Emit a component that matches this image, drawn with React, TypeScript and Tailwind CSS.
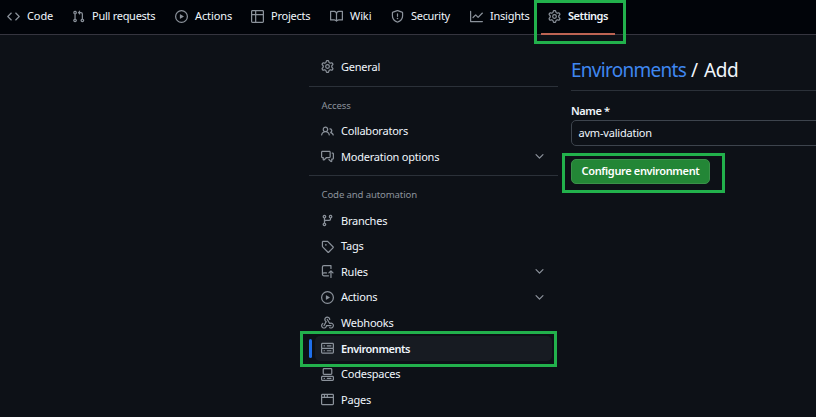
import React from 'react';

const ICONS = {
  code: 'm11.28 3.22 4.25 4.25a.75.75 0 0 1 0 1.06l-4.25 4.25a.749.749 0 0 1-1.275-.326.749.749 0 0 1 .215-.734L13.94 8l-3.72-3.72a.749.749 0 0 1 .326-1.275.749.749 0 0 1 .734.215Zm-6.56 0a.751.751 0 0 1 1.042.018.751.751 0 0 1 .018 1.042L2.06 8l3.72 3.72a.749.749 0 0 1-.326 1.275.749.749 0 0 1-.734-.215L.47 8.53a.75.75 0 0 1 0-1.06Z',
  pull: 'M1.5 3.25a2.25 2.25 0 1 1 3 2.122v5.256a2.251 2.251 0 1 1-1.5 0V5.372A2.25 2.25 0 0 1 1.5 3.25Zm5.677-.177L9.573.677A.25.25 0 0 1 10 .854V2.5h1A2.5 2.5 0 0 1 13.5 5v5.628a2.251 2.251 0 1 1-1.5 0V5a1 1 0 0 0-1-1h-1v1.646a.25.25 0 0 1-.427.177L7.177 3.427a.25.25 0 0 1 0-.354ZM3.75 2.5a.75.75 0 1 0 0 1.5.75.75 0 0 0 0-1.5Zm0 9.5a.75.75 0 1 0 0 1.5.75.75 0 0 0 0-1.5Zm8.25.75a.75.75 0 1 0 1.5 0 .75.75 0 0 0-1.5 0Z',
  play: 'M8 0a8 8 0 1 1 0 16A8 8 0 0 1 8 0ZM1.5 8a6.5 6.5 0 1 0 13 0 6.5 6.5 0 0 0-13 0Zm4.879-2.773 4.264 2.559a.25.25 0 0 1 0 .428l-4.264 2.559A.25.25 0 0 1 6 10.559V5.442a.25.25 0 0 1 .379-.215Z',
  table: 'M0 1.75C0 .784.784 0 1.75 0h12.5C15.216 0 16 .784 16 1.75v12.5A1.75 1.75 0 0 1 14.25 16H1.75A1.75 1.75 0 0 1 0 14.25ZM6.5 6.5v8h7.75a.25.25 0 0 0 .25-.25V6.5Zm8-1.5V1.75a.25.25 0 0 0-.25-.25H6.5V5Zm-13 1.5v7.75c0 .138.112.25.25.25H5v-8ZM5 5V1.5H1.75a.25.25 0 0 0-.25.25V5Z',
  book: 'M0 1.75A.75.75 0 0 1 .75 1h4.253c1.227 0 2.317.59 3 1.501A3.743 3.743 0 0 1 11.006 1h4.245a.75.75 0 0 1 .75.75v10.5a.75.75 0 0 1-.75.75h-4.507a2.25 2.25 0 0 0-1.591.659l-.622.621a.75.75 0 0 1-1.06 0l-.622-.621A2.25 2.25 0 0 0 5.258 13H.75a.75.75 0 0 1-.75-.75Zm7.251 10.324.004-5.073-.002-2.253A2.25 2.25 0 0 0 5.003 2.5H1.5v9h3.757a3.75 3.75 0 0 1 1.994.574ZM8.755 4.75l-.004 7.322a3.752 3.752 0 0 1 1.992-.572H14.5v-9h-3.495a2.25 2.25 0 0 0-2.25 2.25Z',
  shield: 'M7.467.133a1.748 1.748 0 0 1 1.066 0l5.25 1.68A1.75 1.75 0 0 1 15 3.48V7c0 1.566-.32 3.182-1.303 4.682-.983 1.498-2.585 2.813-5.032 3.855a1.697 1.697 0 0 1-1.33 0c-2.447-1.042-4.049-2.357-5.032-3.855C1.32 10.182 1 8.566 1 7V3.48a1.75 1.75 0 0 1 1.217-1.667Zm.61 1.429a.25.25 0 0 0-.153 0l-5.25 1.68a.25.25 0 0 0-.174.238V7c0 1.358.275 2.666 1.057 3.86.784 1.194 2.121 2.34 4.366 3.297a.196.196 0 0 0 .154 0c2.245-.956 3.582-2.104 4.366-3.298C13.225 9.666 13.5 8.36 13.5 7V3.48a.251.251 0 0 0-.174-.237l-5.25-1.68ZM8.75 4.75v3a.75.75 0 0 1-1.5 0v-3a.75.75 0 0 1 1.5 0ZM9 10.5a1 1 0 1 1-2 0 1 1 0 0 1 2 0Z',
  graph: 'M1.5 1.75V13.5h13.75a.75.75 0 0 1 0 1.5H.75a.75.75 0 0 1-.75-.75V1.75a.75.75 0 0 1 1.5 0Zm14.28 2.53-5.25 5.25a.75.75 0 0 1-1.06 0L7 7.06 4.28 9.78a.751.751 0 0 1-1.042-.018.751.751 0 0 1-.018-1.042l3.25-3.25a.75.75 0 0 1 1.06 0L10 7.94l4.72-4.72a.751.751 0 0 1 1.042.018.751.751 0 0 1 .018 1.042Z',
  gear: 'M8 0a8.2 8.2 0 0 1 .701.031C9.444.095 9.99.645 10.16 1.29l.288 1.107c.018.066.079.158.212.224.231.114.454.243.668.386.123.082.233.09.299.071l1.103-.303c.644-.176 1.392.021 1.82.63.27.385.506.792.704 1.218.315.675.111 1.422-.364 1.891l-.814.806c-.049.048-.098.147-.088.294.016.257.016.515 0 .772-.01.147.038.246.088.294l.814.806c.475.469.679 1.216.364 1.891a7.977 7.977 0 0 1-.704 1.217c-.428.61-1.176.807-1.82.63l-1.102-.302c-.067-.019-.177-.011-.3.071a5.909 5.909 0 0 1-.668.386c-.133.066-.194.158-.211.224l-.29 1.106c-.168.646-.715 1.196-1.458 1.26a8.006 8.006 0 0 1-1.402 0c-.743-.064-1.289-.614-1.458-1.26l-.289-1.106c-.018-.066-.079-.158-.212-.224a5.738 5.738 0 0 1-.668-.386c-.123-.082-.233-.09-.299-.071l-1.103.303c-.644.176-1.392-.021-1.82-.63a8.12 8.12 0 0 1-.704-1.218c-.315-.675-.111-1.422.363-1.891l.815-.806c.05-.048.098-.147.088-.294a6.214 6.214 0 0 1 0-.772c.01-.147-.038-.246-.088-.294l-.815-.806C.635 6.045.431 5.298.746 4.623a7.92 7.92 0 0 1 .704-1.217c.428-.61 1.176-.807 1.82-.63l1.102.302c.067.019.177.011.3-.071.214-.143.437-.272.668-.386.133-.066.194-.158.211-.224l.29-1.106C6.009.645 6.556.095 7.299.03 7.53.01 7.764 0 8 0Zm-.571 1.525c-.036.003-.108.036-.137.146l-.289 1.105c-.147.561-.549.967-.998 1.189-.173.086-.34.183-.5.29-.417.278-.97.423-1.529.27l-1.103-.303c-.109-.03-.175.016-.195.045-.22.312-.412.644-.573.99-.014.031-.021.11.059.19l.815.806c.411.406.562.957.53 1.456a4.709 4.709 0 0 0 0 .582c.032.499-.119 1.05-.53 1.456l-.815.806c-.081.08-.073.159-.059.19.162.346.353.677.573.989.02.03.085.076.195.046l1.102-.303c.56-.153 1.113-.008 1.53.27.161.107.328.204.501.29.447.222.85.629.997 1.189l.289 1.105c.029.109.101.143.137.146a6.6 6.6 0 0 0 1.142 0c.036-.003.108-.036.137-.146l.289-1.105c.147-.561.549-.967.998-1.189.173-.086.34-.183.5-.29.417-.278.97-.423 1.529-.27l1.103.303c.109.029.175-.016.195-.045.22-.313.411-.644.573-.99.014-.031.021-.11-.059-.19l-.815-.806c-.411-.406-.562-.957-.53-1.456a4.709 4.709 0 0 0 0-.582c-.032-.499.119-1.05.53-1.456l.815-.806c.081-.08.073-.159.059-.19a6.464 6.464 0 0 0-.573-.989c-.02-.03-.085-.076-.195-.046l-1.102.303c-.56.153-1.113.008-1.53-.27a4.44 4.44 0 0 0-.501-.29c-.447-.222-.85-.629-.997-1.189l-.289-1.105c-.029-.11-.101-.143-.137-.146a6.6 6.6 0 0 0-1.142 0ZM11 8a3 3 0 1 1-6 0 3 3 0 0 1 6 0ZM9.5 8a1.5 1.5 0 1 0-3.001.001A1.5 1.5 0 0 0 9.5 8Z',
  people: 'M2 5.5a3.5 3.5 0 1 1 5.898 2.549 5.508 5.508 0 0 1 3.034 4.084.75.75 0 1 1-1.482.235 4 4 0 0 0-7.9 0 .75.75 0 0 1-1.482-.236A5.507 5.507 0 0 1 3.102 8.05 3.493 3.493 0 0 1 2 5.5ZM11 4a3.001 3.001 0 0 1 2.22 5.018 5.01 5.01 0 0 1 2.56 3.012.749.749 0 0 1-.885.954.752.752 0 0 1-.549-.514 3.507 3.507 0 0 0-2.522-2.372.75.75 0 0 1-.574-.73v-.352a.75.75 0 0 1 .416-.672A1.5 1.5 0 0 0 11 5.5.75.75 0 0 1 11 4Zm-5.5-.5a2 2 0 1 0-.001 3.999A2 2 0 0 0 5.5 3.5Z',
  discussion: 'M1.75 1h8.5c.966 0 1.75.784 1.75 1.75v5.5A1.75 1.75 0 0 1 10.25 10H7.061l-2.574 2.573A1.458 1.458 0 0 1 2 11.543V10h-.25A1.75 1.75 0 0 1 0 8.25v-5.5C0 1.784.784 1 1.75 1ZM1.5 2.75v5.5c0 .138.112.25.25.25h1a.75.75 0 0 1 .75.75v2.19l2.72-2.72a.749.749 0 0 1 .53-.22h3.5a.25.25 0 0 0 .25-.25v-5.5a.25.25 0 0 0-.25-.25h-8.5a.25.25 0 0 0-.25.25Zm13 2a.25.25 0 0 0-.25-.25h-.5a.75.75 0 0 1 0-1.5h.5c.966 0 1.75.784 1.75 1.75v5.5A1.75 1.75 0 0 1 14.25 12H14v1.543a1.458 1.458 0 0 1-2.487 1.03L9.22 12.28a.749.749 0 0 1 .326-1.275.749.749 0 0 1 .734.215l2.22 2.22v-2.19a.75.75 0 0 1 .75-.75h1a.25.25 0 0 0 .25-.25Z',
  branch: 'M9.5 3.25a2.25 2.25 0 1 1 3 2.122V6A2.5 2.5 0 0 1 10 8.5H6a1 1 0 0 0-1 1v1.128a2.251 2.251 0 1 1-1.5 0V5.372a2.25 2.25 0 1 1 1.5 0v1.836A2.493 2.493 0 0 1 6 7h4a1 1 0 0 0 1-1v-.628A2.25 2.25 0 0 1 9.5 3.25Zm-6 0a.75.75 0 1 0 1.5 0 .75.75 0 0 0-1.5 0Zm8.25-.75a.75.75 0 1 0 0 1.5.75.75 0 0 0 0-1.5ZM4.25 12a.75.75 0 1 0 0 1.5.75.75 0 0 0 0-1.5Z',
  tag: 'M1 7.775V2.75C1 1.784 1.784 1 2.75 1h5.025c.464 0 .91.184 1.238.513l6.25 6.25a1.75 1.75 0 0 1 0 2.474l-5.026 5.026a1.75 1.75 0 0 1-2.474 0l-6.25-6.25A1.752 1.752 0 0 1 1 7.775Zm1.5 0c0 .066.026.13.073.177l6.25 6.25a.25.25 0 0 0 .354 0l5.025-5.025a.25.25 0 0 0 0-.354l-6.25-6.25a.25.25 0 0 0-.177-.073H2.75a.25.25 0 0 0-.25.25ZM6 5a1 1 0 1 1 0 2 1 1 0 0 1 0-2Z',
  push: 'M1 2.5A2.5 2.5 0 0 1 3.5 0h8.75a.75.75 0 0 1 .75.75v3.5a.75.75 0 0 1-1.5 0V1.5h-8a1 1 0 0 0-1 1v6.708A2.493 2.493 0 0 1 3.5 9h3.25a.75.75 0 0 1 0 1.5H3.5a1 1 0 0 0 0 2h5.75a.75.75 0 0 1 0 1.5H3.5A2.5 2.5 0 0 1 1 11.5Zm13.23 7.79-.001-.001-1.224-1.224v6.184a.75.75 0 0 1-1.5 0V9.066L10.28 10.29a.75.75 0 0 1-1.06-1.061l2.505-2.504a.75.75 0 0 1 1.06 0L15.29 9.23a.751.751 0 0 1-.018 1.042.751.751 0 0 1-1.042.018Z',
  webhook: 'M5.5 4.25a2.25 2.25 0 0 1 4.5 0 .75.75 0 0 0 1.5 0 3.75 3.75 0 1 0-6.14 2.889l-2.272 4.258a.75.75 0 0 0 1.324.706L7 7.25a.75.75 0 0 0-.309-1.015A2.25 2.25 0 0 1 5.5 4.25ZM7.364 3.607a.75.75 0 0 1 1.03.257l2.608 4.349a3.75 3.75 0 1 1-.628 6.785.75.75 0 0 1 .752-1.299 2.25 2.25 0 1 0-.033-3.88.75.75 0 0 1-1.03-.256L7.107 4.636a.75.75 0 0 1 .257-1.03ZM2.9 8.776A.75.75 0 0 1 2.625 9.8 2.25 2.25 0 1 0 6 11.75a.75.75 0 0 1 .75-.751h5.5a.75.75 0 0 1 0 1.5H7.425a3.751 3.751 0 1 1-5.55-3.998.75.75 0 0 1 1.024.274Z',
  server: 'M1.75 1h12.5c.966 0 1.75.784 1.75 1.75v4c0 .372-.116.717-.314 1 .198.283.314.628.314 1v4a1.75 1.75 0 0 1-1.75 1.75H1.75A1.75 1.75 0 0 1 0 12.75v-4c0-.358.109-.707.314-1a1.739 1.739 0 0 1-.314-1v-4C0 1.784.784 1 1.75 1ZM1.5 2.75v4c0 .138.112.25.25.25h12.5a.25.25 0 0 0 .25-.25v-4a.25.25 0 0 0-.25-.25H1.75a.25.25 0 0 0-.25.25Zm.25 5.75a.25.25 0 0 0-.25.25v4c0 .138.112.25.25.25h12.5a.25.25 0 0 0 .25-.25v-4a.25.25 0 0 0-.25-.25ZM7 4.75A.75.75 0 0 1 7.75 4h4.5a.75.75 0 0 1 0 1.5h-4.5A.75.75 0 0 1 7 4.75ZM7.75 10h4.5a.75.75 0 0 1 0 1.5h-4.5a.75.75 0 0 1 0-1.5ZM3 4.75A.75.75 0 0 1 3.75 4h.5a.75.75 0 0 1 0 1.5h-.5A.75.75 0 0 1 3 4.75ZM3.75 10h.5a.75.75 0 0 1 0 1.5h-.5a.75.75 0 0 1 0-1.5Z',
  codespaces: 'M0 11.25c0-.966.784-1.75 1.75-1.75h12.5c.966 0 1.75.784 1.75 1.75v3A1.75 1.75 0 0 1 14.25 16H1.75A1.75 1.75 0 0 1 0 14.25Zm2-9.5C2 .784 2.784 0 3.75 0h8.5C13.216 0 14 .784 14 1.75v5a1.75 1.75 0 0 1-1.75 1.75h-8.5A1.75 1.75 0 0 1 2 6.75Zm1.75-.25a.25.25 0 0 0-.25.25v5c0 .138.112.25.25.25h8.5a.25.25 0 0 0 .25-.25v-5a.25.25 0 0 0-.25-.25Zm-2 9.5a.25.25 0 0 0-.25.25v3c0 .138.112.25.25.25h12.5a.25.25 0 0 0 .25-.25v-3a.25.25 0 0 0-.25-.25ZM7 12.75a.75.75 0 0 1 .75-.75h4.5a.75.75 0 0 1 0 1.5h-4.5a.75.75 0 0 1-.75-.75Zm-4 0a.75.75 0 0 1 .75-.75h.5a.75.75 0 0 1 0 1.5h-.5a.75.75 0 0 1-.75-.75Z',
  browser: 'M0 2.75C0 1.784.784 1 1.75 1h12.5c.966 0 1.75.784 1.75 1.75v10.5A1.75 1.75 0 0 1 14.25 15H1.75A1.75 1.75 0 0 1 0 13.25ZM14.5 6h-13v7.25c0 .138.112.25.25.25h12.5a.25.25 0 0 0 .25-.25Zm-6-3.5v2h6V2.75a.25.25 0 0 0-.25-.25ZM5 2.5v2h2v-2Zm-3.25 0a.25.25 0 0 0-.25.25V4.5h2v-2Z',
  chevron: 'M12.78 5.22a.749.749 0 0 1 0 1.06l-4.25 4.25a.749.749 0 0 1-1.06 0L3.22 6.28a.749.749 0 1 1 1.06-1.06L8 8.939l3.72-3.719a.749.749 0 0 1 1.06 0Z',
};

type IconName = keyof typeof ICONS;

function Icon({ name }: { name: IconName }) {
  return (
    <svg viewBox="0 0 16 16" className="size-[13px] shrink-0 fill-[#8b929b]" aria-hidden="true">
      <path d={ICONS[name]} />
    </svg>
  );
}

const TABS: { icon: IconName; label: string; box: string; text: string }[] = [
  { icon: 'code', label: 'Code', box: 'w-[65px]', text: '' },
  { icon: 'pull', label: 'Pull requests', box: 'w-[103px]', text: 'tracking-[-0.27px]' },
  { icon: 'play', label: 'Actions', box: 'w-[76px]', text: '' },
  { icon: 'table', label: 'Projects', box: 'w-[79px]', text: 'tracking-[-0.25px]' },
  { icon: 'book', label: 'Wiki', box: 'w-[61px]', text: '' },
  { icon: 'shield', label: 'Security', box: 'w-[79px]', text: 'tracking-[-0.3px]' },
  { icon: 'graph', label: 'Insights', box: 'w-[78px]', text: 'tracking-[-0.25px]' },
];

function Row({ icon, label, expandable = false }: { icon: IconName; label: string; expandable?: boolean }) {
  return (
    <a className="flex h-[25.6px] items-center gap-[7px] pl-[12px] pr-[12px]">
      <Icon name={icon} />
      <span className="grow">{label}</span>
      {expandable && <Icon name="chevron" />}
    </a>
  );
}

export default function App() {
  return (
    <div className="relative flex h-[417px] w-[816px] flex-col overflow-hidden bg-[#0d1117] font-['Noto_Sans','Open_Sans',sans-serif] text-[11px] leading-4 tracking-[-0.1px] whitespace-nowrap text-[#f0f6fc]">
      <nav className="flex h-[35px] shrink-0 items-start border-b border-[#35353f] bg-[#010409] pl-[7px]">
        {TABS.map((t) => (
          <a key={t.label} className={'flex h-8 shrink-0 items-center gap-[7px] ' + t.box}>
            <Icon name={t.icon} />
            <span className={t.text}>{t.label}</span>
          </a>
        ))}
        <a className="-ml-[7px] flex h-[35px] w-[74px] shrink-0 items-start gap-[7px] border-b-2 border-[#bd6453] pl-[7px] font-semibold">
          <span className="flex h-8 items-center gap-[7px]">
            <Icon name="gear" />
            <span className="tracking-[-0.5px]">Settings</span>
          </span>
        </a>
      </nav>

      <div className="flex min-h-0 grow">
        <aside className="ml-[309px] w-[249px] shrink-0 pt-[19px] tracking-[-0.22px]">
          <Row icon="gear" label="General" />
          <div className="mt-[6px] border-t border-[#2b3139]" />
          <h3 className="mt-[11px] pl-[12.5px] text-[9.6px] tracking-[-0.11px] text-[#8b929b]">Access</h3>
          <div className="mt-[5px]">
            <Row icon="people" label="Collaborators" />
            <Row icon="discussion" label="Moderation options" expandable />
          </div>
          <div className="mt-[5px] border-t border-[#2b3139]" />
          <h3 className="mt-[11px] pl-[12.5px] text-[9.6px] tracking-[-0.13px] text-[#8b929b]">Code and automation</h3>
          <div className="mt-[5px]">
            <Row icon="branch" label="Branches" />
            <Row icon="tag" label="Tags" />
            <Row icon="push" label="Rules" expandable />
            <Row icon="play" label="Actions" expandable />
            <Row icon="webhook" label="Webhooks" />
            <div className="flex h-[25.6px] items-center">
              <span className="h-[19px] w-[3px] rounded-sm bg-[#1f6feb]" />
              <a className="ml-[3px] flex h-[25px] w-[237px] items-center gap-[7px] rounded-[5px] bg-[#171b22] pl-[6px] font-semibold">
                <Icon name="server" />
                <span className="tracking-[-0.46px]">Environments</span>
              </a>
            </div>
            <Row icon="codespaces" label="Codespaces" />
            <Row icon="browser" label="Pages" />
          </div>
        </aside>

        <main className="ml-[13px] w-[245px] shrink-0 pt-[20px]">
          <h2 className="flex h-[36px] border-b border-[#2b3139] text-[19px] leading-[30px]">
            <span className="w-[120px] tracking-[-0.72px] text-[#3f87f0]">Environments</span>
            <span className="w-[13px]">/</span>
            <span className="tracking-[-0.4px]">Add</span>
          </h2>
          <label className="mt-[12px] block font-semibold tracking-[-0.4px]">Name *</label>
          <div className="mt-[1px] flex h-[26px] w-[300px] items-center rounded-[5px] border border-[#3d444d] px-[6.5px] tracking-[-0.2px]">avm-validation</div>
          <button className="mt-[13px] flex h-[25px] w-[139px] items-start justify-center rounded-[5px] border border-[#3a9149] bg-[#238636] pt-[3px] font-semibold tracking-[-0.35px] text-white">
            Configure environment
          </button>
        </main>
      </div>

      <div className="absolute top-0 left-[534px] h-[44px] w-[92px] border-3 border-[#22b14c]" />
      <div className="absolute top-[331px] left-[300px] h-[36px] w-[257px] border-3 border-[#22b14c]" />
      <div className="absolute top-[153px] left-[562px] h-[40px] w-[163px] border-3 border-[#22b14c]" />
    </div>
  );
}
